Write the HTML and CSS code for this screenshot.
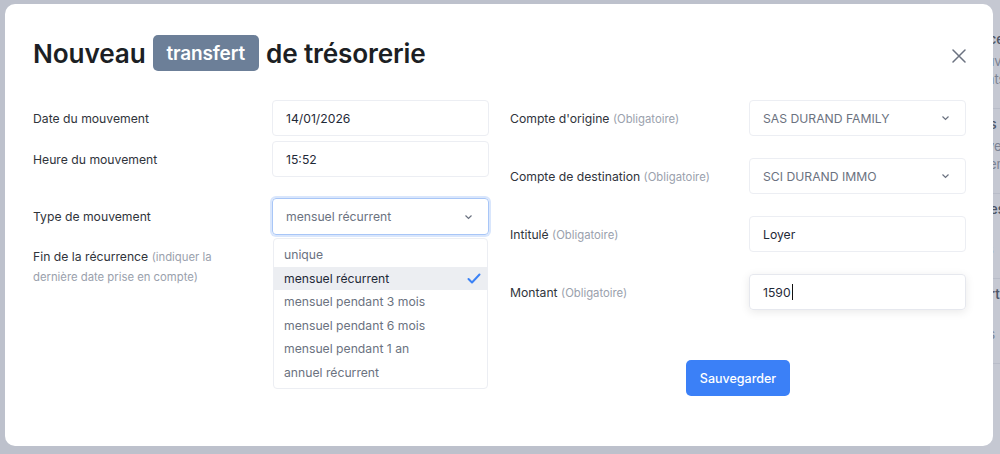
FILE: index.html
```html
<!DOCTYPE html>
<html lang="fr">
<head>
    <meta charset="UTF-8">
    <title>Nouveau transfert de trésorerie</title>
    <link rel="stylesheet" href="styles.css">
</head>
<body>
<div class="page">
    <div class="page-main"></div>
    <div class="page-side">
        <div class="side-card">
            <b>Échéances</b>
            <p>Les mouvements</p>
            <p>récurrents.</p>
        </div>
        <div class="side-card">
            <b>Recettes</b>
            <p>Loyers versés</p>
            <p>encaissements</p>
            <p>totalisés</p>
        </div>
        <div class="side-card">
            <b>Dépenses</b>
            <p class="link">Saisir</p>
            <p>Charges</p>
            <p>totales</p>
        </div>
        <div class="side-card">
            <b>Transferts</b>
            <p class="link">Calculer</p>
            <p>comptes</p>
        </div>
    </div>
</div>

<div class="overlay">
    <div class="modal">
        <div class="modal-head">
            <h1>Nouveau <span class="badge">transfert</span> de trésorerie</h1>
            <button class="close" type="button" aria-label="Fermer">
                <svg width="14" height="14" viewBox="0 0 14 14"><path d="M1 1L13 13M13 1L1 13" stroke="#6b7280" stroke-width="1.5" stroke-linecap="round"/></svg>
            </button>
        </div>

        <div class="modal-body">
            <div class="col">
                <div class="row">
                    <label>Date du mouvement</label>
                    <div class="field">14/01/2026</div>
                </div>
                <div class="row row-tight">
                    <label>Heure du mouvement</label>
                    <div class="field">15:52</div>
                </div>
                <div class="row row-type">
                    <label>Type de mouvement</label>
                    <div class="select-wrap">
                        <div class="field select focus">
                            <span>mensuel récurrent</span>
                            <svg class="chev" width="9" height="6" viewBox="0 0 9 6"><path d="M1.5 1.5L4.5 4.5L7.5 1.5" fill="none" stroke="#6b7280" stroke-width="1.2"/></svg>
                        </div>
                        <ul class="menu">
                            <li>unique</li>
                            <li class="active">mensuel récurrent
                                <svg width="14" height="11" viewBox="0 0 14 11"><path d="M1.5 6L5 9.5L12.5 1.5" fill="none" stroke="#3b82f6" stroke-width="2" stroke-linecap="round" stroke-linejoin="round"/></svg>
                            </li>
                            <li>mensuel pendant 3 mois</li>
                            <li>mensuel pendant 6 mois</li>
                            <li>mensuel pendant 1 an</li>
                            <li>annuel récurrent</li>
                        </ul>
                    </div>
                </div>
                <div class="row row-end">
                    <label class="multi">Fin de la récurrence <span class="hint">(indiquer la dernière date prise en compte)</span></label>
                </div>
            </div>

            <div class="col">
                <div class="row">
                    <label>Compte d'origine <span class="hint">(Obligatoire)</span></label>
                    <div class="field select">
                        <span>SAS DURAND FAMILY</span>
                        <svg class="chev" width="9" height="6" viewBox="0 0 9 6"><path d="M1.5 1.5L4.5 4.5L7.5 1.5" fill="none" stroke="#6b7280" stroke-width="1.2"/></svg>
                    </div>
                </div>
                <div class="row row-right">
                    <label>Compte de destination <span class="hint">(Obligatoire)</span></label>
                    <div class="field select">
                        <span>SCI DURAND IMMO</span>
                        <svg class="chev" width="9" height="6" viewBox="0 0 9 6"><path d="M1.5 1.5L4.5 4.5L7.5 1.5" fill="none" stroke="#6b7280" stroke-width="1.2"/></svg>
                    </div>
                </div>
                <div class="row row-right">
                    <label>Intitulé <span class="hint">(Obligatoire)</span></label>
                    <div class="field">Loyer</div>
                </div>
                <div class="row row-right">
                    <label>Montant <span class="hint">(Obligatoire)</span></label>
                    <div class="field typing">1590<i class="caret"></i></div>
                </div>
                <div class="actions">
                    <button class="save" type="button">Sauvegarder</button>
                </div>
            </div>
        </div>
    </div>
</div>
</body>
</html>
```

FILE: styles.css
```css
*{
    margin:0;
    padding:0;
    box-sizing: border-box;
    list-style: none;
}
body{
    width: 1000px;
    height: 454px;
    overflow: hidden;
    font-family: Inter, "Noto Sans", sans-serif;
    color: #1f2937;
}
.page{
    display: flex;
    height: 454px;
    background: #eef0f3;
}
.page-main{
    flex: 1;
}
.page-side{
    width: 70px;
    padding-top: 24px;
    background: #fff;
}
.side-card{
    padding: 6px 6px 14px 12px;
    border-bottom: 1px solid #e5e7eb;
    font-size: 13px;
    line-height: 18px;
    color: #6b7280;
    white-space: nowrap;
    height: 85px;
}
.side-card b{
    color: #111827;
    font-weight: 600;
    display: block;
    margin-bottom: 4px;
}
.side-card .link{
    color: #3b82f6;
}

.overlay{
    position: absolute;
    top: 0;
    left: 0;
    width: 1000px;
    height: 454px;
    background: rgba(140,145,165,.5);
    padding: 4px 7px 8px 5px;
}
.modal{
    height: 442px;
    background: #fff;
    border-radius: 10px;
    padding: 30px 27px 0 28px;
}
.modal-head{
    display: flex;
    justify-content: space-between;
    align-items: center;
    height: 38px;
}
.modal-head h1{
    font-size: 26.2px;
    font-weight: 600;
    color: #1c1f24;
    letter-spacing: -0.15px;
    display: flex;
    align-items: center;
    gap: 7px;
}
.badge{
    background: #6c7f98;
    color: #fff;
    font-size: 19px;
    font-weight: 600;
    border-radius: 5px;
    padding: 0 14px;
    height: 36px;
    line-height: 37px;
}
.close{
    border: 0;
    background: none;
    width: 14px;
    height: 14px;
    margin-top: 6px;
}
.close svg{
    display: block;
}

.modal-body{
    display: grid;
    grid-template-columns: 456px 456px;
    gap: 21px;
    margin-top: 28px;
}
.row{
    display: flex;
    align-items: center;
    height: 36px;
}
.row label{
    width: 239px;
    font-size: 12.2px;
    color: #30343b;
}
.row label.multi{
    line-height: 19px;
    width: 185px;
}
.hint{
    color: #9aa1ad;
    font-size: 11.3px;
}
.row-tight{
    margin-top: 5px;
}
.row-type{
    margin-top: 21px;
    height: 37px;
}
.row-end{
    margin-top: 13px;
    height: 38px;
}
.row-right{
    margin-top: 22px;
}
.field{
    width: 217px;
    height: 36px;
    border: 1px solid #eceef3;
    border-radius: 4px;
    padding: 0 13px;
    display: flex;
    align-items: center;
    font-size: 12.2px;
    color: #1f2937;
}
.select{
    justify-content: space-between;
    color: #6b7280;
}
.chev{
    margin-right: 2px;
}
.focus{
    border: 1px solid #a8c6f7;
    box-shadow: 0 0 0 2px #d9e6fc;
    height: 37px;
}
.typing{
    box-shadow: 0 2px 10px rgba(0,0,0,.09);
    border-color: #e6e8ee;
}
.caret{
    display: inline-block;
    width: 1px;
    height: 16px;
    background: #111;
    margin-left: 1px;
}
.select-wrap{
    position: relative;
}
.menu{
    position: absolute;
    top: 40px;
    left: 1px;
    width: 215px;
    padding: 4px 0 4px;
    background: #fff;
    border: 1px solid #eceef3;
    border-radius: 4px;
    z-index: 2;
}
.menu li{
    height: 23.5px;
    padding: 0 6px 0 10px;
    display: flex;
    align-items: center;
    justify-content: space-between;
    font-size: 12.2px;
    color: #6b7280;
}
.menu li.active{
    background: #eceef2;
    color: #1f2937;
}
.actions{
    display: flex;
    justify-content: center;
    margin-top: 50px;
}
.save{
    width: 104px;
    height: 36px;
    border: 0;
    border-radius: 5px;
    background: #3b80f7;
    color: #fff;
    font-family: Inter, sans-serif;
    font-size: 12.5px;
    font-weight: 500;
}
```
